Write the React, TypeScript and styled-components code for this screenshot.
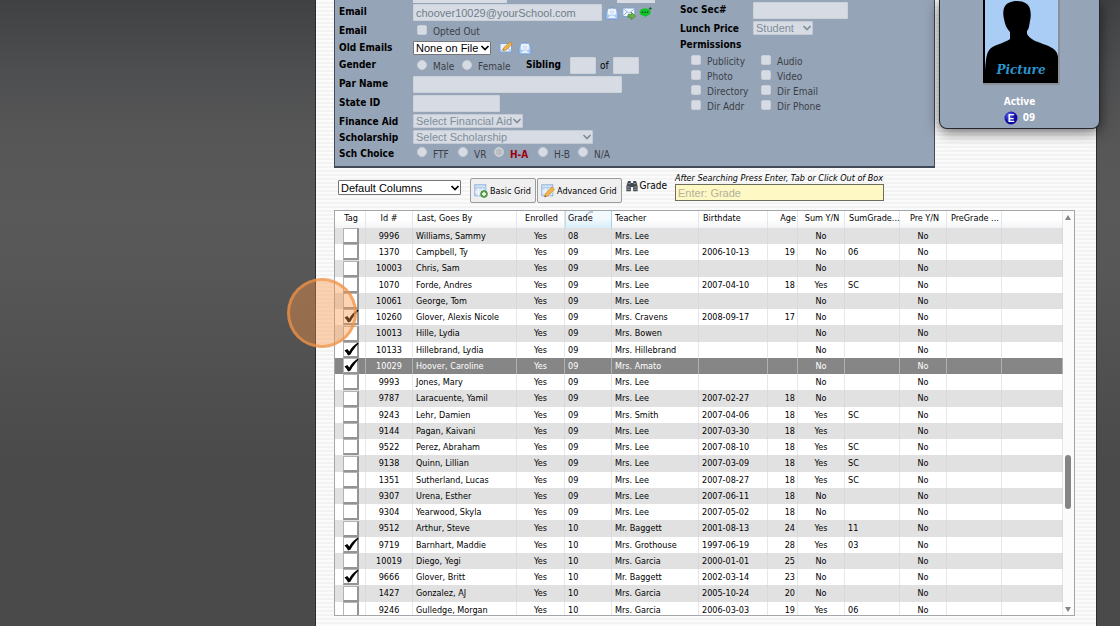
import React from 'react';
import styled, { createGlobalStyle, css } from 'styled-components';

const ui = "'DejaVu Sans Condensed', 'DejaVu Sans', sans-serif";
const control = "'Liberation Sans', Arial, sans-serif";

const GlobalStyle = createGlobalStyle`
  *, *::before, *::after { box-sizing: border-box; }
  body {
    margin: 0;
    background: #4a4a4a linear-gradient(#404143, #4d4e50 70px, #565656 135px, #595959 210px, #575757 270px, #4a4a4a 460px) no-repeat;
    font-family: ${ui};
    color: #000;
    overflow: hidden;
  }
  input, select, button { margin: 0; font-family: ${control}; }
`;

const Backdrop = styled.div`
  height: 100vh;
  padding: 0 23px 0 315px;
`;

const Page = styled.main`
  height: 100%;
  display: flex;
  flex-direction: column;
  border: solid #2c2c2c;
  border-width: 0 1px;
  padding: 0 21px 10px 18px;
  background: repeating-linear-gradient(#fbfbfb 0 2px, #f3f3f3 2px 4px);
`;

const Top = styled.header`
  display: flex;
  align-items: flex-start;
  gap: 4px;
  margin-right: -25px;
`;

const Profile = styled.form`
  flex: 1;
  height: 168px;
  display: grid;
  grid-template-columns: 341px 1fr;
  padding: 0 4px;
  background: #96a4b7;
  border: 1px solid #424a57;
  border-top: 0;
  border-bottom-width: 2px;
`;

const Fields = styled.div`
  display: grid;
  align-content: start;
  grid-template-columns: 74px 1fr;
  grid-template-rows: 3px 19px 17px 17px 19px 19px 19px 16px 16px 16px;
`;

const SideFields = styled.div`
  display: grid;
  align-content: start;
  grid-template-columns: 73px 1fr;
  grid-template-rows: 1px 19px 16px 16px;
`;

const labelText = css`
  font-size: 10px;
  line-height: 18px;
  font-weight: bold;
  white-space: nowrap;
`;

const FieldLabel = styled.label`
  ${labelText}
`;

const FieldTitle = styled.span`
  ${labelText}
`;

const Line = styled.div<{ $gap?: number }>`
  display: flex;
  align-items: center;
  gap: ${(p) => p.$gap ?? 0}px;
  font-size: 10px;
`;

const TextBox = styled.input<{ $w: number; $h?: number }>`
  width: ${(p) => p.$w}px;
  height: ${(p) => p.$h ?? 17}px;
  padding: 0 2px;
  border: 1px solid #ccd2da;
  border-radius: 1px;
  background: #d7dce4;
  color: #6f7c88;
  font-size: 11px;
`;

const Pick = styled.span<{ $w: number; $kind: 'off' | 'plain' | 'toolbar' }>`
  display: inline-grid;
  grid-template-columns: 1fr 12px;
  align-items: center;
  width: ${(p) => p.$w}px;
  height: ${(p) => (p.$kind === 'toolbar' ? 15 : 14)}px;
  background: ${(p) => (p.$kind === 'off' ? '#d7dce4' : '#fff')};
  border: 1px solid ${(p) => (p.$kind === 'off' ? '#c4cbd5' : '#767676')};
  border-radius: 1px;
  color: ${(p) => (p.$kind === 'off' ? '#7f8c9a' : '#000')};

  select {
    grid-area: 1 / 1 / 2 / 3;
    width: 100%;
    height: 100%;
    padding: 0 2px;
    appearance: none;
    border: 0;
    background: none;
    color: inherit;
    opacity: 1;
    font-size: 11px;
    line-height: 12px;
  }
  svg { grid-area: 1 / 2; justify-self: end; pointer-events: none; }
`;

const Option = styled.label<{ $w?: number; $red?: boolean }>`
  display: inline-flex;
  align-items: center;
  gap: 6px;
  width: ${(p) => (p.$w ? p.$w + 'px' : 'auto')};
  font-size: 10px;
  line-height: 15px;
  white-space: nowrap;
  color: ${(p) => (p.$red ? '#9b0010' : '#3a3f47')};
  font-weight: ${(p) => (p.$red ? 'bold' : 'normal')};

  input {
    flex: none;
    appearance: none;
    width: 10px;
    height: 10px;
    margin-bottom: 4px;
    background: #d7dce4;
    border: 1px solid #c9cfd8;
    border-radius: 2px;
  }
  input[type='radio'] { border-radius: 50%; }
  input[type='radio']:checked { background: radial-gradient(#b9bcc1 3px, #d7dce4 4px); }
`;

const Permissions = styled.fieldset`
  grid-column: 1 / -1;
  margin: 0;
  padding: 2px 0 0 11px;
  border: 0;
  display: grid;
  grid-template-columns: 70px 1fr;
  grid-auto-rows: 15px;
`;

const Slice = styled.span<{ $w: number }>`
  width: ${(p) => p.$w}px;
  height: 3px;
  background: #d7dce4;
`;

const Card = styled.aside`
  z-index: 1;
  width: 161px;
  height: 129px;
  display: flex;
  flex-direction: column;
  align-items: center;
  background: #96a4b7;
  border: 1px solid #23282f;
  border-top: 0;
  border-radius: 0 0 8px 8px;
  box-shadow: 0 3px 14px rgba(0, 0, 0, 0.6);
  color: #fff;
  font-size: 10px;
  font-weight: bold;
  line-height: 16px;
`;

const Photo = styled.svg`
  width: 77px;
  height: 85px;
  margin: 0 0 9px 4px;
`;

const Grade = styled.span`
  display: flex;
  align-items: center;
  gap: 5px;
`;

const Toolbar = styled.div`
  display: flex;
  align-items: flex-start;
  flex: none;
  height: 42px;
  padding: 5px 0 0 4px;
`;

const ViewPicker = styled.div`
  margin: 7px 9px 0 0;
  font-size: 0;
`;

const GridButton = styled.button`
  display: flex;
  align-items: center;
  justify-content: center;
  gap: 2px;
  height: 25px;
  margin: 5px 1px 0 0;
  padding: 0 4px 0 3px;
  border: 1px solid #9b9b9b;
  border-radius: 2px;
  background: #efefef;
  font-family: ${ui};
  font-size: 9px;
  white-space: nowrap;
`;

const SearchLabel = styled.label`
  display: flex;
  align-items: center;
  gap: 2px;
  margin: 5px 8px 0 3px;
  font-size: 10px;
  line-height: 15px;
`;

const Search = styled.div`
  display: flex;
  flex-direction: column;
  font-size: 9px;
  line-height: 11px;
  font-style: italic;

  input {
    width: 209px;
    height: 17px;
    padding: 0 2px;
    background: #fdf8c4;
    border: 1px solid #6d6d5c;
    font-size: 11px;
  }
  input::placeholder { color: #b4b09a; }
`;

const GridBox = styled.section`
  flex: 1;
  min-height: 0;
  display: grid;
  grid-template-columns: 1fr 11px;
  background: #fff;
  border: 1px solid #a3a6ab;
`;

const Viewport = styled.div`
  overflow: hidden;
  min-height: 0;
`;

const Table = styled.table`
  width: 100%;
  table-layout: fixed;
  border-collapse: separate;
  border-spacing: 0;
  font-size: 9px;
  line-height: 15px;
`;

const Col = styled.col<{ $w?: number }>`
  width: ${(p) => (p.$w ? p.$w + 'px' : 'auto')};
`;

type Align = 'left' | 'center' | 'right';

const Head = styled.th<{ $align: Align; $sorted?: boolean; $pad: number }>`
  height: 17px;
  padding: 0 ${(p) => (p.$align === 'right' ? 1 : 0)}px 2px ${(p) => p.$pad}px;
  text-align: ${(p) => p.$align};
  font-weight: normal;
  white-space: nowrap;
  border-right: 1px solid #e4e6e9;
  background: linear-gradient(#fff 50%, #f3f4f6);
  ${(p) =>
    p.$sorted &&
    css`
      background: linear-gradient(#f3fafe 45%, #d8ecf8);
      border-right-color: #a5d0e8;
      box-shadow: inset 1px 0 #b9dcef;
    `}
`;

const SortMark = styled.svg`
  position: absolute;
  margin: 0 0 0 -7px;
`;

const Row = styled.tr<{ $selected?: boolean }>`
  height: 16px;
  background: #fff;
  &:nth-child(odd) { background: #e1e1e1; }
  &:nth-child(4n + 3) { height: 17px; }
  ${(p) => p.$selected && css`&& { background: #868686; color: #fff; }`}
`;

const Cell = styled.td<{ $align: Align }>`
  padding: 0 ${(p) => (p.$align === 'right' ? 2 : 0)}px 0 ${(p) => (p.$align === 'left' ? 3 : 0)}px;
  text-align: ${(p) => p.$align};
  white-space: nowrap;
  overflow: hidden;
  border-right: 1px solid rgba(210, 212, 216, 0.55);
`;

const Tick = styled.label`
  display: grid;
  justify-content: center;
  height: 16px;
  padding-left: 2px;

  input {
    grid-area: 1 / 1;
    appearance: none;
    width: 16px;
    height: 16px;
    background: #fff;
    border: 1px solid #b4b4b4;
    border-right: 2px solid #949494;
    border-bottom: 2px solid #949494;
  }
  svg { grid-area: 1 / 1; pointer-events: none; }
`;

const Scroller = styled.div`
  display: grid;
  grid-template-rows: 12px 232fr 54px 94fr 12px;
  place-items: center;
  padding-right: 1px;
  background: #fbfbfb;
`;

const Thumb = styled.span`
  grid-row: 3;
  width: 6px;
  height: 54px;
  border-radius: 3px;
  background: #858585;
`;

const DownArrow = styled.svg`
  grid-row: 5;
`;

const ClickMarker = styled.div`
  position: absolute;
  z-index: 2;
  left: 287px;
  top: 278px;
  width: 70px;
  height: 70px;
  border-radius: 50%;
  border: 3px solid rgba(240, 145, 70, 0.7);
  background: rgba(249, 150, 70, 0.4);
  pointer-events: none;
`;

const Chevron = () => (
  <svg width="10" height="8" viewBox="0 0 10 8" fill="none" stroke="currentColor" strokeWidth="1.7">
    <path d="M1.5 2 5 5.5 8.5 2" />
  </svg>
);

const OpenMail = () => (
  <svg width="14" height="14" viewBox="0 0 14 14">
    <path d="M1 5.500 7 1l6 4.500V13H1z" fill="#a9c9f3" stroke="#6d9bdc" />
    <path d="M3 3h8v5.500L7 10 3 8.500z" fill="#fff" stroke="#b8d0ee" strokeWidth=".6" />
    <path d="M4.500 5.200h5M4.500 7h5" stroke="#a5c3ea" strokeWidth=".8" />
    <path d="M1.500 12.500 5.500 9h3l4 3.500z" fill="#e6f1fd" stroke="#8fb4e6" strokeWidth=".7" />
  </svg>
);

const SendMail = () => (
  <svg width="14" height="14" viewBox="0 0 14 14">
    <rect x=".8" y="2" width="12" height="8.5" fill="#eef5fd" stroke="#7ba4d8" />
    <path d="m1 2.5 6 4.7 6-4.7M1 10l4-4M13 10 9 6" fill="none" stroke="#8cb0df" strokeWidth=".9" />
    <path d="M6 8.6h3.3V6.3l4.2 3.7-4.2 3.7v-2.4H6z" fill="#6db33f" stroke="#3f8424" strokeWidth=".7" />
  </svg>
);

const Chat = () => (
  <svg width="13" height="13" viewBox="0 0 13 13">
    <path d="M6 2.4c3.2 0 5.6 1.5 5.6 3.8 0 2-1.8 3.3-4 3.7L5.8 12V10C2.8 9.9.6 8.5.6 6.2.6 4 3 2.4 6 2.4z" fill="#12c22c" />
    <circle cx="3.4" cy="6.3" r=".8" fill="#064b10" />
    <circle cx="6" cy="6.3" r=".8" fill="#064b10" />
    <circle cx="8.6" cy="6.3" r=".8" fill="#064b10" />
    <path d="M11.3 1v3M9.8 2.5h3" stroke="#086b16" strokeWidth=".9" />
  </svg>
);

const EditMail = () => (
  <svg width="14" height="13" viewBox="0 0 14 13">
    <rect x="1" y="2.5" width="11.5" height="8.5" fill="#e9f2fc" stroke="#7ba4d8" />
    <path d="m1.5 10.5 4-4M12 10.5l-4-4" stroke="#8cb0df" />
    <path d="m4 9.800.7-3L11 .9l2.200 2.100-6.100 5.900z" fill="#f3b445" stroke="#c07d22" strokeWidth=".7" />
  </svg>
);

const TableBase = () => (
  <>
    <rect x=".8" y=".8" width="11" height="11" fill="#d9e8f7" stroke="#8fb2da" />
    <path d="M1 3.8h11" stroke="#b5d0ee" strokeWidth="2" />
    <path d="M1 8h11M4.5 4v8M8.3 4v8" stroke="#f7fbff" strokeWidth=".8" />
  </>
);

const TableAdd = () => (
  <svg width="14" height="14" viewBox="0 0 14 14">
    <TableBase />
    <circle cx="10" cy="10" r="3.4" fill="#5fa548" stroke="#3d7c2c" strokeWidth=".7" />
    <path d="M10 8v4M8 10h4" stroke="#fff" strokeWidth="1.3" />
  </svg>
);

const TableEdit = () => (
  <svg width="14" height="14" viewBox="0 0 14 14">
    <TableBase />
    <path d="m3.500 13 .9-3.600L11 2.800l2.500 2.400-6.600 6.800z" fill="#f3b445" stroke="#c98a2e" strokeWidth=".7" />
    <path d="m3.500 13 .5-1.700 1.200 1.200z" fill="#554" />
  </svg>
);

const Binoculars = () => (
  <svg width="12" height="12" viewBox="0 0 12 12">
    <path d="M2 1h2.800v2H7.200V1H10l1.600 5v5.200H7.200V7H4.800v4.200H.4V6z" fill="#434a52" />
    <path d="M1.200 7h2.600M8.200 7h2.600M2.500 3.600h1.800M7.700 3.600h1.800M1.200 9.300h2.600M8.200 9.300h2.600" stroke="#a9b3bd" strokeWidth=".9" />
  </svg>
);

const Check = () => (
  <svg width="16" height="16" viewBox="0 0 16 16">
    <path d="M1.500 8.600 4.300 7l2 2.500C8.400 6 11 3 14.900.6l.6 1.100C12 5.200 9.700 8.300 7.600 12.600l-2.500.8C4.100 11.500 3 9.900 1.500 8.600z" fill="#000" />
  </svg>
);

const StatusBadge = () => (
  <svg width="14" height="14" viewBox="0 0 14 14">
    <defs>
      <radialGradient id="badge" cx=".35" cy=".3">
        <stop offset="0" stopColor="#5b5bf0" />
        <stop offset="1" stopColor="#0a0aa0" />
      </radialGradient>
    </defs>
    <circle cx="7" cy="7" r="6.5" fill="url(#badge)" />
    <text x="7" y="10.5" textAnchor="middle" fontSize="10" fontWeight="bold" fill="#fff" fontFamily="Liberation Sans, sans-serif">E</text>
  </svg>
);

function Select({ id, w, kind, value }: { id: string; w: number; kind: 'off' | 'plain' | 'toolbar'; value: string }) {
  return (
    <Pick $w={w} $kind={kind}>
      <select id={id} aria-label={value} disabled={kind === 'off'}>
        <option>{value}</option>
      </select>
      <Chevron />
    </Pick>
  );
}

const columns: { title: string; w?: number; align: Align; pad: number }[] = [
  { title: 'Tag', w: 31, align: 'center', pad: 2 },
  { title: 'Id #', w: 47, align: 'center', pad: 0 },
  { title: 'Last, Goes By', w: 104, align: 'left', pad: 4 },
  { title: 'Enrolled', w: 48, align: 'center', pad: 2 },
  { title: 'Grade', w: 47, align: 'left', pad: 3 },
  { title: 'Teacher', w: 87, align: 'left', pad: 3 },
  { title: 'Birthdate', w: 69, align: 'left', pad: 4 },
  { title: 'Age', w: 30, align: 'right', pad: 0 },
  { title: 'Sum Y/N', w: 47, align: 'center', pad: 2 },
  { title: 'SumGrade...', w: 55, align: 'left', pad: 4 },
  { title: 'Pre Y/N', w: 47, align: 'center', pad: 3 },
  { title: 'PreGrade ...', w: 55, align: 'left', pad: 4 },
  { title: '', align: 'left', pad: 0 },
];

const records = `9996|Williams, Sammy|08|Mrs. Lee|||No||
1370|Campbell, Ty|09|Mrs. Lee|2006-10-13|19|No|06|
10003|Chris, Sam|09|Mrs. Lee|||No||
1070|Forde, Andres|09|Mrs. Lee|2007-04-10|18|Yes|SC|
10061|George, Tom|09|Mrs. Lee|||No||
10260|Glover, Alexis Nicole|09|Mrs. Cravens|2008-09-17|17|No||x
10013|Hille, Lydia|09|Mrs. Bowen|||No||
10133|Hillebrand, Lydia|09|Mrs. Hillebrand|||No||x
10029|Hoover, Caroline|09|Mrs. Amato|||No||x
9993|Jones, Mary|09|Mrs. Lee|||No||
9787|Laracuente, Yamil|09|Mrs. Lee|2007-02-27|18|No||
9243|Lehr, Damien|09|Mrs. Smith|2007-04-06|18|Yes|SC|
9144|Pagan, Kaivani|09|Mrs. Lee|2007-03-30|18|Yes||
9522|Perez, Abraham|09|Mrs. Lee|2007-08-10|18|Yes|SC|
9138|Quinn, Lillian|09|Mrs. Lee|2007-03-09|18|Yes|SC|
1351|Sutherland, Lucas|09|Mrs. Lee|2007-08-27|18|Yes|SC|
9307|Urena, Esther|09|Mrs. Lee|2007-06-11|18|No||
9304|Yearwood, Skyla|09|Mrs. Lee|2007-05-02|18|No||
9512|Arthur, Steve|10|Mr. Baggett|2001-08-13|24|Yes|11|
9719|Barnhart, Maddie|10|Mrs. Grothouse|1997-06-19|28|Yes|03|x
10019|Diego, Yegi|10|Mrs. Garcia|2000-01-01|25|No||
9666|Glover, Britt|10|Mr. Baggett|2002-03-14|23|No||x
1427|Gonzalez, AJ|10|Mrs. Garcia|2005-10-24|20|No||
9246|Gulledge, Morgan|10|Mrs. Garcia|2006-03-03|19|Yes|06|`
  .split('\n')
  .map((line) => line.split('|'));

const permissionNames = ['Publicity', 'Audio', 'Photo', 'Video', 'Directory', 'Dir Email', 'Dir Addr', 'Dir Phone'];

const choices = [
  { name: 'FTF', w: 41 },
  { name: 'VR', w: 36 },
  { name: 'H-A', w: 44 },
  { name: 'H-B', w: 40 },
  { name: 'N/A', w: 38 },
];

const Choices = styled(Line)`
  padding: 2px 0 0 4px;
`;

const SiblingLabel = styled(FieldTitle)`
  margin: 0 9px 0 14px;
  padding-bottom: 2px;
`;

const Of = styled.span`
  margin: 0 4px;
`;

const MailTools = styled.span`
  display: flex;
  gap: 3px;
  margin-left: 3px;
`;

const OldMailTools = styled(MailTools)`
  gap: 5px;
  margin-left: 8px;
`;

function StudentForm() {
  return (
    <Profile>
      <Fields>
        <span />
        <Line $gap={110}>
          <Slice $w={94} />
          <Slice $w={38} />
        </Line>

        <FieldLabel htmlFor="email">Email</FieldLabel>
        <Line>
          <TextBox id="email" $w={189} defaultValue="choover10029@yourSchool.com" />
          <MailTools>
            <OpenMail />
            <SendMail />
            <Chat />
          </MailTools>
        </Line>

        <FieldTitle>Email</FieldTitle>
        <Choices>
          <Option>
            <input type="checkbox" />
            Opted Out
          </Option>
        </Choices>

        <FieldLabel htmlFor="old-emails">Old Emails</FieldLabel>
        <Line>
          <Select id="old-emails" w={78} kind="plain" value="None on File" />
          <OldMailTools>
            <EditMail />
            <OpenMail />
          </OldMailTools>
        </Line>

        <FieldTitle>Gender</FieldTitle>
        <Line>
          <Choices>
            <Option $w={45}>
              <input type="radio" name="gender" />
              Male
            </Option>
            <Option $w={50}>
              <input type="radio" name="gender" />
              Female
            </Option>
          </Choices>
          <SiblingLabel>Sibling</SiblingLabel>
          <TextBox aria-label="Sibling number" $w={26} />
          <Of>of</Of>
          <TextBox aria-label="Sibling count" $w={26} />
        </Line>

        <FieldLabel htmlFor="parent">Par Name</FieldLabel>
        <Line>
          <TextBox id="parent" $w={209} />
        </Line>

        <FieldLabel htmlFor="state-id">State ID</FieldLabel>
        <Line>
          <TextBox id="state-id" $w={87} />
        </Line>

        <FieldLabel htmlFor="aid">Finance Aid</FieldLabel>
        <Line>
          <Select id="aid" w={110} kind="off" value="Select Financial Aid" />
        </Line>

        <FieldLabel htmlFor="scholarship">Scholarship</FieldLabel>
        <Line>
          <Select id="scholarship" w={180} kind="off" value="Select Scholarship" />
        </Line>

        <FieldTitle>Sch Choice</FieldTitle>
        <Choices>
          {choices.map((c) => (
            <Option key={c.name} $w={c.w} $red={c.name === 'H-A'}>
              <input type="radio" name="choice" defaultChecked={c.name === 'H-A'} />
              {c.name}
            </Option>
          ))}
        </Choices>
      </Fields>

      <SideFields>
        <span />
        <span />
        <FieldLabel htmlFor="ssn">Soc Sec#</FieldLabel>
        <Line>
          <TextBox id="ssn" $w={95} />
        </Line>
        <FieldLabel htmlFor="lunch">Lunch Price</FieldLabel>
        <Line>
          <Select id="lunch" w={60} kind="off" value="Student" />
        </Line>
        <FieldTitle>Permissions</FieldTitle>
        <span />
        <Permissions>
          {permissionNames.map((name) => (
            <Option key={name}>
              <input type="checkbox" />
              {name}
            </Option>
          ))}
        </Permissions>
      </SideFields>
    </Profile>
  );
}

function PhotoCard() {
  return (
    <Card>
      <Photo viewBox="0 0 77 85">
        <rect width="77" height="85" fill="#8b8f96" />
        <rect width="75" height="83" fill="#000" />
        <rect x="2" width="73" height="82" fill="#a9cdf5" />
        <path d="M2 82V70C3 60 3 52 8 48c6-4 16-6 19-9V32c-3-3-5-7-6-13-1-4-1-8 0-11C23 3 28 1 34 1c7 0 12 3 13 8 1 4 1 8 0 12-1 5-1 8-3 10v3c3 6 11 8 19 11 7 3 11 5 12 12v25z" fill="#000" />
        <text x="38" y="74" textAnchor="middle" fontFamily="'DejaVu Serif', serif" fontStyle="italic" fontSize="12" fill="#2b94cc">
          Picture
        </text>
      </Photo>
      <span>Active</span>
      <Grade>
        <StatusBadge />
        09
      </Grade>
    </Card>
  );
}

function StudentGrid() {
  return (
    <GridBox>
      <Viewport>
        <Table>
          <colgroup>
            {columns.map((c) => (
              <Col key={c.title} $w={c.w} />
            ))}
          </colgroup>
          <thead>
            <tr>
              {columns.map((c) => (
                <Head key={c.title} $align={c.align} $pad={c.pad} $sorted={c.title === 'Grade'}>
                  {c.title}
                  {c.title === 'Grade' && (
                    <SortMark width="8" height="4" viewBox="0 0 8 4">
                      <path d="M1 4C2 1.5 4 .5 7 1" fill="none" stroke="#7d97a8" />
                    </SortMark>
                  )}
                </Head>
              ))}
            </tr>
          </thead>
          <tbody>
            {records.map(([id, name, grade, teacher, birth, age, sum, sumGrade, tag]) => (
              <Row key={id} $selected={id === '10029'}>
                <Cell $align="center">
                  <Tick>
                    <input type="checkbox" aria-label={`Tag ${name}`} defaultChecked={tag === 'x'} />
                    {tag === 'x' && <Check />}
                  </Tick>
                </Cell>
                {[id, name, 'Yes', grade, teacher, birth, age, sum, sumGrade, 'No', '', ''].map((value, i) => (
                  <Cell key={i} $align={columns[i + 1].align}>
                    {value}
                  </Cell>
                ))}
              </Row>
            ))}
          </tbody>
        </Table>
      </Viewport>
      <Scroller>
        <svg width="6" height="5" viewBox="0 0 6 5">
          <path d="M0 5 3 0l3 5z" fill="#858585" />
        </svg>
        <Thumb />
        <DownArrow width="6" height="5" viewBox="0 0 6 5">
          <path d="M0 0h6L3 5z" fill="#858585" />
        </DownArrow>
      </Scroller>
    </GridBox>
  );
}

export default function App() {
  return (
    <Backdrop>
      <GlobalStyle />
      <Page>
        <Top>
          <StudentForm />
          <PhotoCard />
        </Top>
        <Toolbar>
          <ViewPicker>
            <Select id="view" w={123} kind="toolbar" value="Default Columns" />
          </ViewPicker>
          <GridButton type="button">
            <TableAdd />
            Basic Grid
          </GridButton>
          <GridButton type="button">
            <TableEdit />
            Advanced Grid
          </GridButton>
          <SearchLabel htmlFor="grade-search">
            <Binoculars />
            Grade
          </SearchLabel>
          <Search>
            <span>After Searching Press Enter, Tab or Click Out of Box</span>
            <input id="grade-search" placeholder="Enter: Grade" />
          </Search>
        </Toolbar>
        <StudentGrid />
      </Page>
      <ClickMarker />
    </Backdrop>
  );
}
